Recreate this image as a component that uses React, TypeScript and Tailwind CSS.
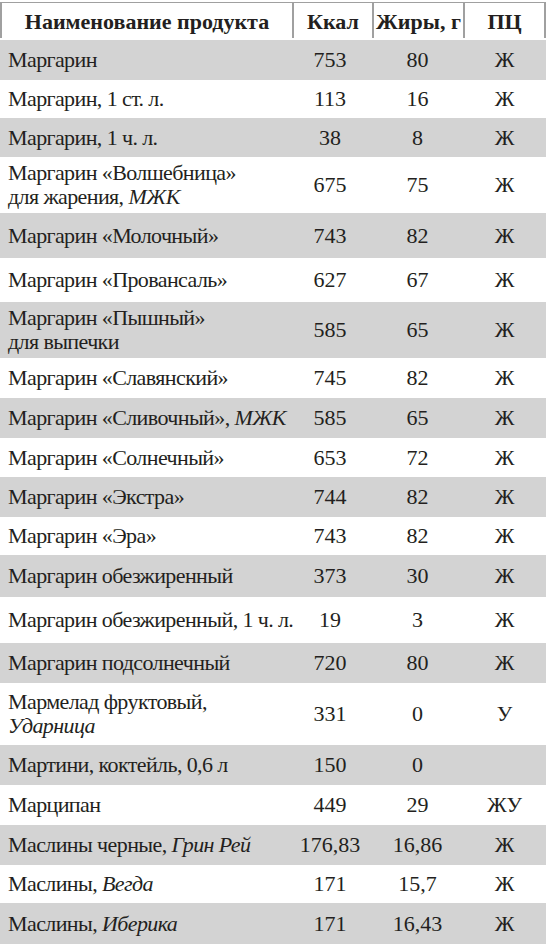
import React from "react";

type Row = { name: React.ReactNode; kcal: string; fat: string; pc: string; h: string };

const I = ({ children }: { children: React.ReactNode }) => (
  <i className="font-['Liberation_Serif'] italic">{children}</i>
);

const rows: Row[] = [
  { name: "Маргарин", kcal: "753", fat: "80", pc: "Ж", h: "h-[40px]" },
  { name: "Маргарин, 1 ст. л.", kcal: "113", fat: "16", pc: "Ж", h: "h-[38px]" },
  { name: "Маргарин, 1 ч. л.", kcal: "38", fat: "8", pc: "Ж", h: "h-[39px]" },
  {
    name: (
      <>
        Маргарин «Волшебница»
        <br />
        для жарения, <I>МЖК</I>
      </>
    ),
    kcal: "675",
    fat: "75",
    pc: "Ж",
    h: "h-[56px]",
  },
  { name: "Маргарин «Молочный»", kcal: "743", fat: "82", pc: "Ж", h: "h-[45px]" },
  { name: "Маргарин «Провансаль»", kcal: "627", fat: "67", pc: "Ж", h: "h-[44px]" },
  {
    name: (
      <>
        Маргарин «Пышный»
        <br />
        для выпечки
      </>
    ),
    kcal: "585",
    fat: "65",
    pc: "Ж",
    h: "h-[56px]",
  },
  { name: "Маргарин «Славянский»", kcal: "745", fat: "82", pc: "Ж", h: "h-[40px]" },
  {
    name: (
      <>
        Маргарин «Сливочный», <I>МЖК</I>
      </>
    ),
    kcal: "585",
    fat: "65",
    pc: "Ж",
    h: "h-[40px]",
  },
  { name: "Маргарин «Солнечный»", kcal: "653", fat: "72", pc: "Ж", h: "h-[39px]" },
  { name: "Маргарин «Экстра»", kcal: "744", fat: "82", pc: "Ж", h: "h-[40px]" },
  { name: "Маргарин «Эра»", kcal: "743", fat: "82", pc: "Ж", h: "h-[38px]" },
  { name: "Маргарин обезжиренный", kcal: "373", fat: "30", pc: "Ж", h: "h-[42px]" },
  { name: "Маргарин обезжиренный, 1 ч. л.", kcal: "19", fat: "3", pc: "Ж", h: "h-[46px]" },
  { name: "Маргарин подсолнечный", kcal: "720", fat: "80", pc: "Ж", h: "h-[40px]" },
  {
    name: (
      <>
        Мармелад фруктовый,
        <br />
        <I>Ударница</I>
      </>
    ),
    kcal: "331",
    fat: "0",
    pc: "У",
    h: "h-[62px]",
  },
  { name: "Мартини, коктейль, 0,6 л", kcal: "150", fat: "0", pc: "", h: "h-[40px]" },
  { name: "Марципан", kcal: "449", fat: "29", pc: "ЖУ", h: "h-[40px]" },
  {
    name: (
      <>
        Маслины черные, <I>Грин Рей</I>
      </>
    ),
    kcal: "176,83",
    fat: "16,86",
    pc: "Ж",
    h: "h-[40px]",
  },
  {
    name: (
      <>
        Маслины, <I>Вегда</I>
      </>
    ),
    kcal: "171",
    fat: "15,7",
    pc: "Ж",
    h: "h-[38px]",
  },
  {
    name: (
      <>
        Маслины, <I>Иберика</I>
      </>
    ),
    kcal: "171",
    fat: "16,43",
    pc: "Ж",
    h: "h-[41px]",
  },
];

const cell = "font-['Liberation_Serif'] text-[22px] flex items-center justify-center";
const head =
  "font-['Liberation_Serif'] font-bold text-[22px] flex items-center justify-center border-l-2 border-[#a0a0a0] pt-[2px]";

export default function App() {
  return (
    <div className="font-['Liberation_Serif'] w-[546px] h-[944px] overflow-hidden bg-white text-[#231f20] text-[22px] leading-[24px]">
      <div className="h-[40px] pt-[2px]">
        <div className="grid grid-cols-[292px_80px_91px_83px] h-[36px] border-t border-[#a0a0a0]">
          <div className={head}>Наименование продукта</div>
          <div className={head}>Ккал</div>
          <div className={head}>Жиры, г</div>
          <div className={`${head} border-r-2`}>ПЦ</div>
        </div>
      </div>
      {rows.map((r, i) => (
        <div
          key={i}
          className={`grid grid-cols-[292px_80px_91px_83px] ${r.h} ${i % 2 === 0 ? "bg-[#d3d3d3]" : "bg-white"}`}
        >
          <div className="font-['Liberation_Serif'] text-[22px] flex items-center pl-[8px]">
            <span className="font-['Liberation_Serif'] whitespace-nowrap tracking-[-0.6px]">{r.name}</span>
          </div>
          <div className={`${cell} pr-[4px]`}>{r.kcal}</div>
          <div className={cell}>{r.fat}</div>
          <div className={cell}>{r.pc}</div>
        </div>
      ))}
    </div>
  );
}
